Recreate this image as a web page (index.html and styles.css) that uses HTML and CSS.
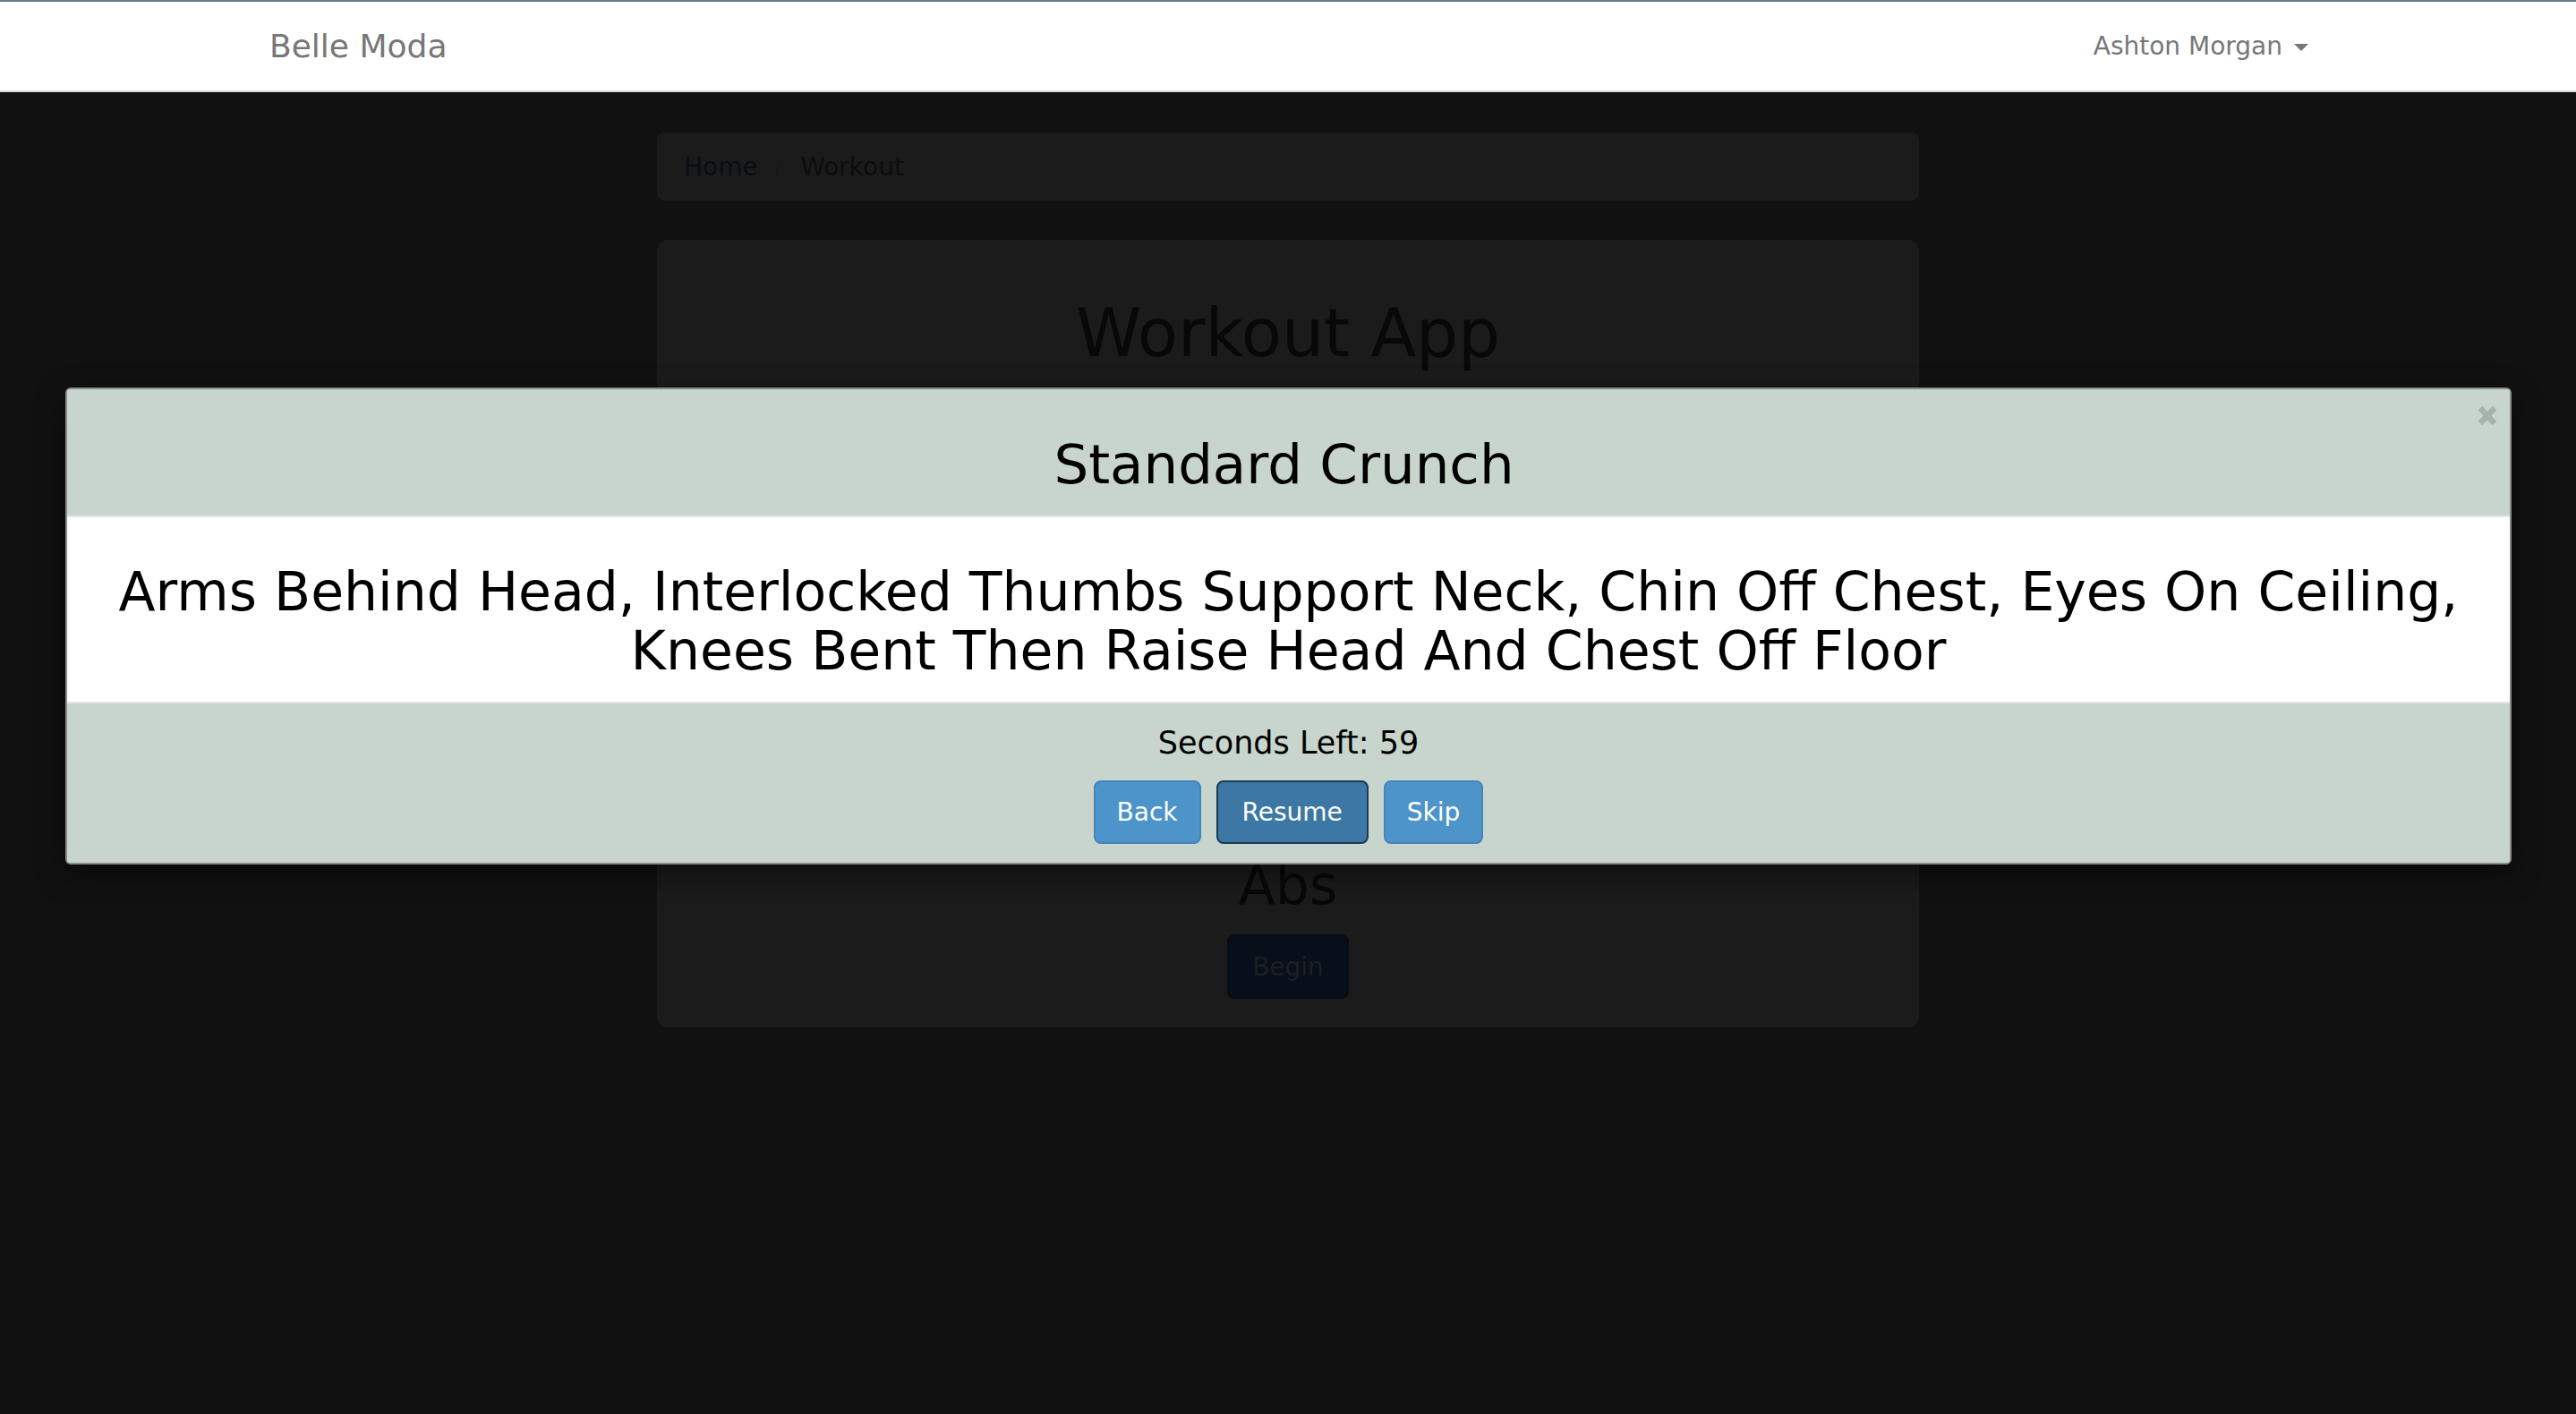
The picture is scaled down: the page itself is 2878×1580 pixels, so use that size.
FILE: index.html
```html
<!DOCTYPE html>
<html lang="en">
<head>
<meta charset="utf-8">
<title>Workout App - Belle Moda</title>
<link rel="stylesheet" href="styles.css">
</head>
<body>
<nav class="navbar">
  <div class="container nav-inner">
    <a class="brand" href="#">Belle Moda</a>
    <a class="user-menu" href="#">Ashton Morgan<span class="caret"></span></a>
  </div>
</nav>

<main class="page">
  <ol class="breadcrumb">
    <li><a href="#">Home</a></li>
    <li class="sep">/</li>
    <li class="active">Workout</li>
  </ol>

  <section class="jumbotron">
    <h1 class="jumbo-title">Workout App</h1>
    <h2 class="workout-name">Abs</h2>
    <button class="btn-begin" type="button">Begin</button>
  </section>
</main>

<div class="modal" role="dialog">
  <button class="modal-close" type="button" aria-label="Close">
    <svg width="24" height="25" viewBox="0 0 24 25"><path d="M4 4 L20 21 M20 4 L4 21" stroke="currentColor" stroke-width="6.5" stroke-linecap="butt" fill="none"/></svg>
  </button>
  <div class="modal-header">
    <h2 class="modal-title">Standard Crunch</h2>
  </div>
  <div class="modal-body">
    <h2 class="exercise-desc">Arms Behind Head, Interlocked Thumbs Support Neck, Chin Off Chest, Eyes On Ceiling, Knees Bent Then Raise Head And Chest Off Floor</h2>
  </div>
  <div class="modal-footer">
    <p class="timer">Seconds Left: 59</p>
    <div class="btn-row">
      <button class="btn" type="button">Back</button>
      <button class="btn btn-active" type="button">Resume</button>
      <button class="btn" type="button">Skip</button>
    </div>
  </div>
</div>
</body>
</html>
```

FILE: styles.css
```css
* { box-sizing: border-box; }

html, body {
  margin: 0;
  padding: 0;
}

body {
  background: #111111;
  font-family: "DejaVu Sans", "Liberation Sans", sans-serif;
  color: #080808;
  min-height: 1580px;
}

a { text-decoration: none; }

/* Navbar */
.navbar {
  background: #ffffff;
  border-top: 2px solid #6a7792;
  border-bottom: 2px solid #d7dee6;
}

.container {
  width: 2340px;
  margin: 0 auto;
  padding: 0 30px;
}

.nav-inner {
  height: 99px;
  display: flex;
  align-items: center;
  justify-content: space-between;
}

.brand {
  color: #777777;
  font-size: 36px;
  line-height: 40px;
  margin-left: 2px;
}

.user-menu {
  color: #777777;
  font-size: 28px;
  line-height: 40px;
  display: flex;
  align-items: center;
}

.caret {
  display: inline-block;
  width: 0;
  height: 0;
  margin-left: 13px;
  margin-top: 2px;
  border-top: 8px solid #777777;
  border-left: 8px solid transparent;
  border-right: 8px solid transparent;
}

/* Page */
.page {
  width: 1410px;
  margin: 45px auto 0;
}

.breadcrumb {
  list-style: none;
  margin: 0;
  height: 76px;
  padding: 0 30px;
  background: #1b1b1b;
  border-radius: 8px;
  display: flex;
  align-items: center;
  font-size: 28px;
}

.breadcrumb a { color: #060e15; }

.breadcrumb .sep {
  color: #191919;
  margin: 0 20px 0 18px;
}

.breadcrumb .active { color: #0d0d0d; }

.jumbotron {
  margin-top: 44px;
  height: 880px;
  background: #1b1b1b;
  border-radius: 12px;
  padding: 64px 30px 32px;
  display: flex;
  flex-direction: column;
  align-items: center;
  text-align: center;
}

.jumbo-title {
  margin: 0;
  font-size: 74px;
  line-height: 1.1;
  font-weight: normal;
  color: #080808;
}

.workout-name {
  margin: 543px 0 0;
  font-size: 60px;
  line-height: 1.1;
  font-weight: normal;
  color: #080808;
}

.btn-begin {
  margin-top: 22px;
  height: 72px;
  padding: 0 26px;
  font-family: inherit;
  font-size: 28px;
  color: #1d1f22;
  background: #07101a;
  border: 2px solid #060d15;
  border-radius: 8px;
}

/* Modal */
.modal {
  position: fixed;
  top: 433px;
  left: 73px;
  width: 2733px;
  background: #ffffff;
  border: 2px solid #8b8b8b;
  border-radius: 6px;
  overflow: hidden;
  box-shadow: 0 10px 30px rgba(0, 0, 0, 0.5);
  text-align: center;
}

.modal-close {
  position: absolute;
  top: 17px;
  right: 13px;
  width: 24px;
  height: 25px;
  padding: 0;
  border: 0;
  background: transparent;
  color: #a7b2aa;
  display: block;
}

.modal-close svg { display: block; }

.modal-header {
  background: #c8d5cc;
  padding: 51px 40px 24px 30px;
  border-bottom: 2px solid #e5e5e5;
}

.modal-title,
.exercise-desc {
  margin: 0;
  font-size: 60px;
  line-height: 66px;
  font-weight: normal;
  color: #000000;
}

.modal-title { font-size: 61px; }

.modal-body {
  background: #ffffff;
  padding: 50px 30px 24px;
}

.modal-footer {
  background: #c8d5cc;
  border-top: 2px solid #e5e5e5;
  padding: 25px 30px 21px;
}

.timer {
  margin: 0;
  font-size: 35px;
  line-height: 38px;
  color: #000000;
}

.btn-row {
  margin-top: 23px;
  display: flex;
  justify-content: center;
  gap: 17px;
}

.btn {
  font-family: inherit;
  font-size: 28px;
  line-height: 41px;
  padding: 13px 24px;
  color: #ffffff;
  background: #4d94cb;
  border: 2px solid #4582ba;
  border-radius: 8px;
}

.btn-active {
  background: #3c77a5;
  border-color: #1c3b55;
  padding: 13px 27px;
}
```
